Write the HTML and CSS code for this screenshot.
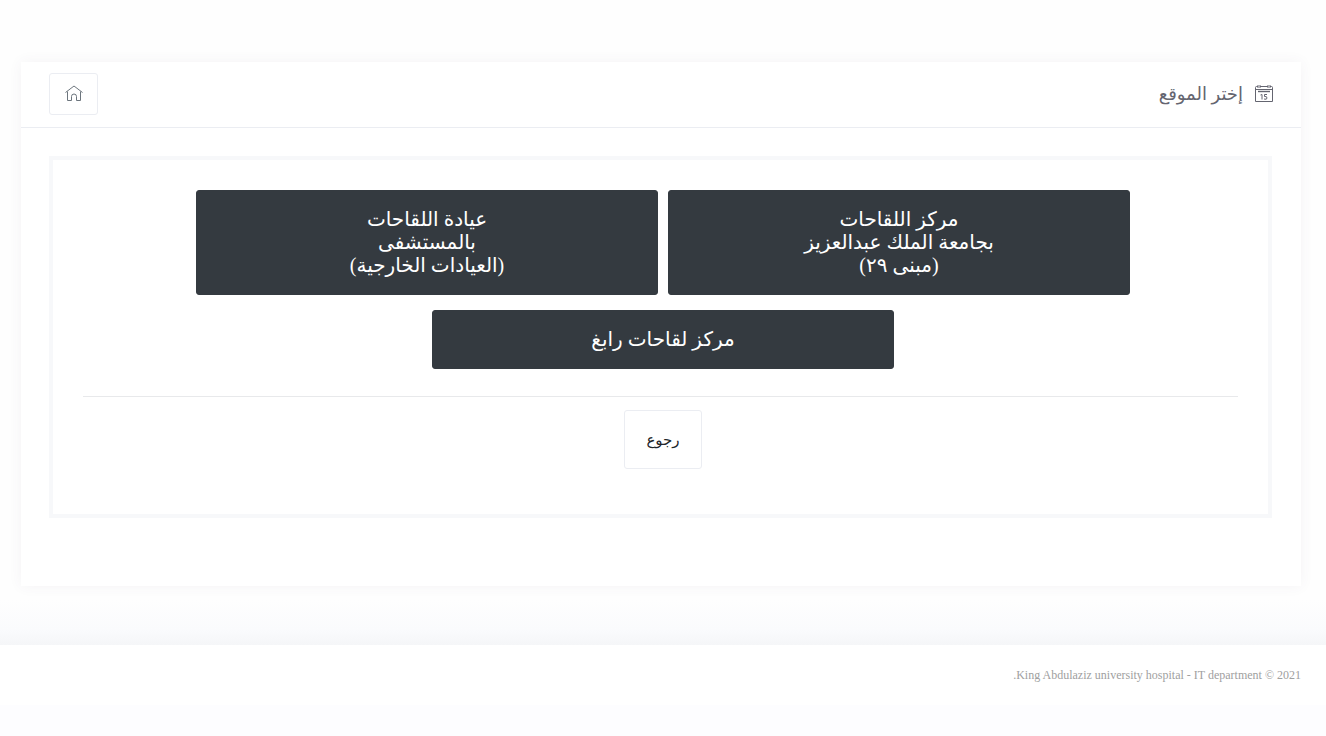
FILE: index.html
```
<!DOCTYPE html>
<html lang="ar" dir="rtl">
<head>
    <meta charset="UTF-8">
    <meta name="viewport" content="width=device-width, initial-scale=1.0">
    <title>إختر الموقع</title>
    <link rel="stylesheet" href="styles.css">
</head>
<body>
    <main class="content">
        <section class="card">
            <header class="card-header">
                <h1 class="card-title">
                    <svg class="calendar-icon" viewBox="0 0 18 18" fill="none" stroke="currentColor" aria-hidden="true">
                        <path d="M3 1.5H1.5Q.5 1.5.5 2.5V16.5H17.5V2.5Q17.5 1.5 16.5 1.5H15M5 1.5h8M.5 4.5h17M3 0v3M5 0v3M13 0v3M15 0v3"/>
                        <path stroke-width="1.4" d="M3 6.5h12"/>
                        <path d="M5.5 10L7 9.500V14.500M12 9.500H9.500V11.500Q12 11 12 13T9 14"/>
                    </svg>
                    <span>إختر الموقع</span>
                </h1>
                <a class="home-btn" href="#" aria-label="الرئيسية">
                    <svg class="home-icon" viewBox="0 0 18 18" fill="none" stroke="currentColor" aria-hidden="true">
                        <path d="M.5 7.500L9 1L17.500 7.500M2.500 6.500V15.500H6.500V11.500Q6.500 9 9 9T11.500 11.500V15.500H15.500V6.500"/>
                    </svg>
                </a>
            </header>
            <div class="card-body">
                <form class="panel">
                    <div class="locations">
                        <button type="button" class="location-btn">مركز اللقاحات<br>بجامعة الملك عبدالعزيز<br>(مبنى ٢٩)</button>
                        <button type="button" class="location-btn">عيادة اللقاحات<br>بالمستشفى<br>(العيادات الخارجية)</button>
                        <button type="button" class="location-btn">مركز لقاحات رابغ</button>
                    </div>
                    <hr class="divider">
                    <div class="actions">
                        <button type="button" class="back-btn">رجوع</button>
                    </div>
                </form>
            </div>
        </section>
    </main>
    <footer class="footer">King Abdulaziz university hospital - IT department © 2021.</footer>
</body>
</html>
```

FILE: styles.css
```
* {
    box-sizing: border-box;
}
body {
    margin: 0;
    background-color: #fdfdff;
    font-family: "Liberation Serif", "DejaVu Sans", serif;
    color: #212529;
}
.content {
    padding: 62px 25px 59px 21px;
    background: linear-gradient(#fefefe 0, #fefefe 600px, #fafbfd 630px, #f5f6f8 645px);
}
.card {
    background-color: #fff;
    box-shadow: 0 0 13px rgba(82, 63, 105, 0.06);
}
.card-header {
    display: flex;
    align-items: center;
    justify-content: space-between;
    height: 66px;
    padding: 0 28px 2px;
    border-bottom: 1px solid #ebedf2;
}
.card-title {
    display: flex;
    align-items: center;
    gap: 12px;
    margin: 0;
    font-size: 18px;
    font-weight: normal;
    line-height: 24px;
    color: #646570;
}
.calendar-icon {
    width: 18px;
    height: 18px;
}
.home-btn {
    display: flex;
    align-items: center;
    justify-content: center;
    width: 49px;
    height: 42px;
    border: 1px solid #ebedf2;
    border-radius: 3px;
    color: #6c757d;
}
.home-icon {
    width: 18px;
    height: 18px;
}
.card-body {
    padding: 28px 29px 68px 28px;
}
.panel {
    padding: 30px;
    padding-bottom: 45px;
    border: 4px solid #f7f8fa;
}
.locations,
.actions {
    display: flex;
    flex-wrap: wrap;
    justify-content: center;
    padding-left: 5px;
}
.locations {
    gap: 15px 10px;
}
.location-btn {
    width: 462px;
    max-width: 100%;
    padding: 17px 20px;
    border: 1px solid #343a40;
    border-radius: 3px;
    background-color: #343a40;
    color: #fff;
    font-family: inherit;
    font-size: 20px;
    line-height: 23px;
    cursor: pointer;
}
.location-btn:hover {
    background-color: #23272b;
}
.divider {
    margin: 27px 0 13px;
    border: 0;
    border-top: 1px solid #e8e9eb;
}
.back-btn {
    width: 78px;
    height: 59px;
    border: 1px solid #ebedf2;
    border-radius: 3px;
    background-color: #fff;
    color: #212529;
    font-family: inherit;
    font-size: 15px;
    cursor: pointer;
}
.footer {
    padding: 20px 25px;
    background-color: #fff;
    color: #a0a0a0;
    font-size: 12px;
    line-height: 20px;
}
```
